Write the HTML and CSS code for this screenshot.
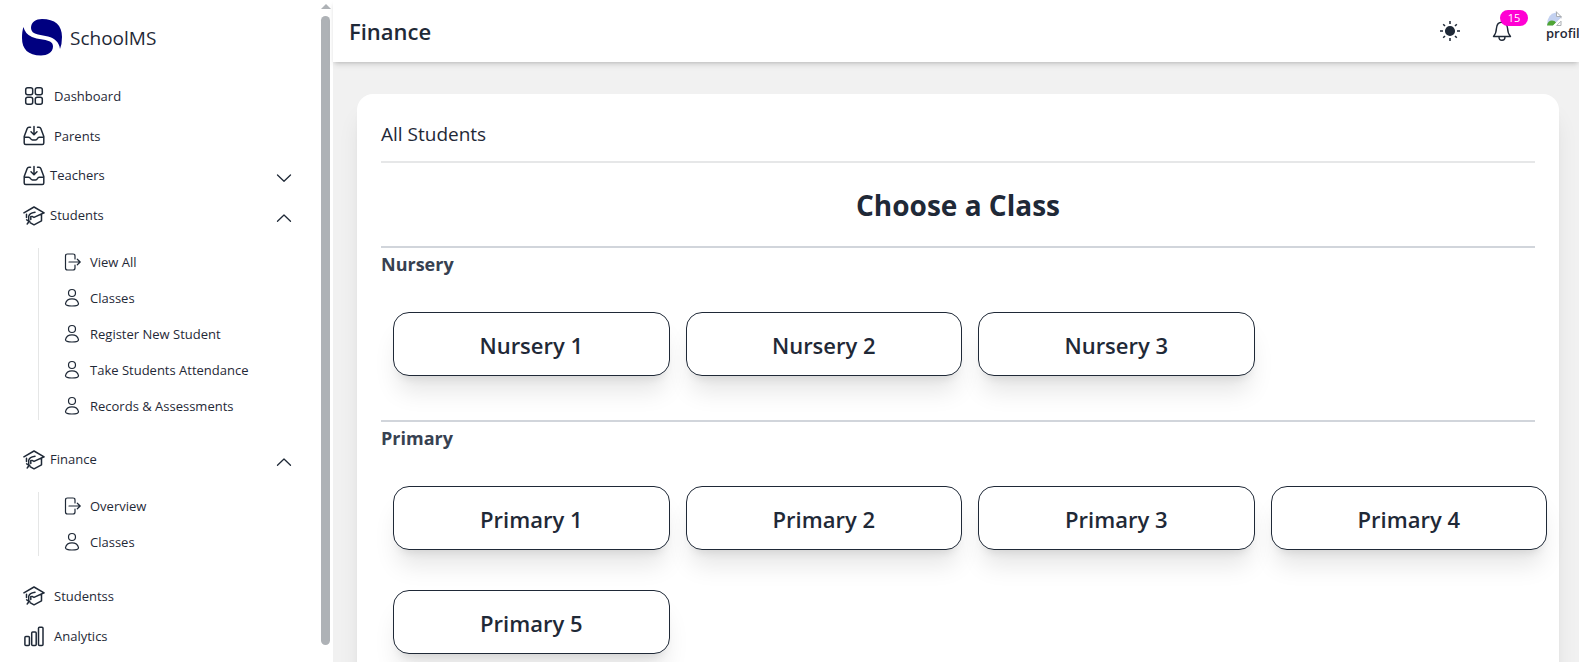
FILE: index.html
```html
<!DOCTYPE html>
<html lang="en">
<head>
<meta charset="utf-8">
<title>SchoolMS - Finance</title>
<link rel="stylesheet" href="styles.css">
</head>
<body>
<svg class="sprite" aria-hidden="true">
  <symbol id="grid" viewBox="0 0 22 22"><rect x="2.700" y="2.700" width="7" height="7" rx="2"/><rect x="12.300" y="2.700" width="7" height="7" rx="2"/><rect x="2.700" y="12.300" width="7" height="7" rx="2"/><rect x="12.300" y="12.300" width="7" height="7" rx="2"/></symbol>
  <symbol id="tray" viewBox="0 0 22 22"><path d="M7.500 2.200H6Q4.700 2.200 4.200 3.600L1.200 11.500V18Q1.200 19.500 2.700 19.500H19.300Q20.800 19.500 20.800 18V11.500L17.800 3.600Q17.300 2.200 16 2.200H14.500M1.200 12.200H5.500Q6.800 12.200 7.500 13.500T9.500 15H12.500Q13.800 15 14.500 13.500T16.500 12.200H20.800M11 1.500V9.500M8 6.800L11 9.800L14 6.800"/></symbol>
  <symbol id="cap" viewBox="0 0 22 22"><path d="M.900 7.800L11 2L21.100 7.800L11 12.400L9 11.300M3.500 9.200V12.500M7 17.600L11 19.800L18.500 15.800V9.300M12 7.200Q6 8.200 5.700 11.500V15Q5.700 17.500 4.200 19M3.600 14.800L6.800 16.400M7.800 11.500V14.500"/></symbol>
  <symbol id="exit" viewBox="0 0 18 20"><path d="M11 7V4Q11 2 9 2H3.500Q1.500 2 1.500 4V16Q1.500 18 3.500 18H9Q11 18 11 16V13M5 10H16M13.300 7.200L16.200 10L13.300 12.800"/></symbol>
  <symbol id="person" viewBox="0 0 18 20"><circle cx="8" cy="5" r="3.500"/><path d="M1.500 15.700Q2.500 10.800 8 10.800T14.500 15.700Q14.500 18 8 18T1.500 15.700Z"/></symbol>
  <symbol id="bars" viewBox="0 0 22 22"><rect x="1.900" y="11.500" width="4.500" height="9" rx="1"/><rect x="8.700" y="7" width="4.500" height="13.500" rx="1"/><rect x="15.500" y="2.200" width="4.500" height="18.300" rx="1"/></symbol>
  <symbol id="down" viewBox="0 0 16 16"><path d="M1.500 5L8 11.200L14.500 5"/></symbol>
  <symbol id="up" viewBox="0 0 16 16"><path d="M1.500 11.200L8 5L14.500 11.200"/></symbol>
</svg>
<div class="app">
  <aside class="sidebar">
    <div class="side-content">
      <a class="brand" href="#">
        <svg class="logo" viewBox="0 0 40 38"><path d="M9 9C9 3 14 0 20 0C33 0 40 6 40 18Q40 25 38 30C37 23 33 19.500 26 17.500L16 15.500Q9 14 9 9Z"/><path d="M1.500 8Q3 15 10 18C16 20.500 22 20 28 22.500Q31 24 31 27.500C31 33.500 25 36.500 19 36.500C6 36.500 0 30 0 19Q0 12 1.500 8Z"/></svg>
        <span>SchoolMS</span>
      </a>
      <nav aria-label="Main">
        <a class="item" href="#"><svg class="icon"><use href="#grid"/></svg>Dashboard</a>
        <a class="item" href="#"><svg class="icon"><use href="#tray"/></svg>Parents</a>
        <button class="item group" aria-expanded="false"><svg class="icon"><use href="#tray"/></svg><span>Teachers</span><svg class="chevron"><use href="#down"/></svg></button>
        <button class="item group" aria-expanded="true"><svg class="icon"><use href="#cap"/></svg><span>Students</span><svg class="chevron"><use href="#up"/></svg></button>
        <div class="submenu">
          <a class="subitem" href="#"><svg class="subicon"><use href="#exit"/></svg>View All</a>
          <a class="subitem" href="#"><svg class="subicon"><use href="#person"/></svg>Classes</a>
          <a class="subitem" href="#"><svg class="subicon"><use href="#person"/></svg>Register New Student</a>
          <a class="subitem" href="#"><svg class="subicon"><use href="#person"/></svg>Take Students Attendance</a>
          <a class="subitem" href="#"><svg class="subicon"><use href="#person"/></svg>Records &amp; Assessments</a>
        </div>
        <button class="item group" aria-expanded="true"><svg class="icon"><use href="#cap"/></svg><span>Finance</span><svg class="chevron"><use href="#up"/></svg></button>
        <div class="submenu">
          <a class="subitem" href="#"><svg class="subicon"><use href="#exit"/></svg>Overview</a>
          <a class="subitem" href="#"><svg class="subicon"><use href="#person"/></svg>Classes</a>
        </div>
        <a class="item" href="#"><svg class="icon"><use href="#cap"/></svg>Studentss</a>
        <a class="item" href="#"><svg class="icon"><use href="#bars"/></svg>Analytics</a>
      </nav>
    </div>
    <div class="scrollbar" aria-hidden="true"><div class="arrow"></div><div class="thumb"></div></div>
  </aside>
  <div class="page">
    <header class="topbar">
      <h1>Finance</h1>
      <div class="actions">
        <button class="action" aria-label="Toggle theme"><svg class="sun" viewBox="0 0 20 20"><circle cx="10" cy="10" r="4.300"/><path d="M10 0V3M10 17V20M0 10H3M17 10H20M3.200 3.200L5 5M15 15L16.800 16.800M16.800 3.200L15 5M5 15L3.200 16.800"/></svg></button>
        <button class="action bell" aria-label="Notifications"><svg class="belly" viewBox="0 0 20 22"><path d="M10 2.200Q15 2.200 15.500 8Q15.800 13.500 18.500 16.500H1.500Q4.200 13.500 4.500 8Q5 2.200 10 2.200ZM7 17Q7 20.300 10 20.300T13 17"/></svg><span class="badge">15</span></button>
        <a class="avatar" href="#">
          <svg class="broken" viewBox="0 0 16 16"><path d="M1 14Q1 3 10 1.500L15 5.500V7L7 14.500Z" fill="#c3d1f0"/><path d="M1 14.500Q2 9.500 6 9.500Q9 9.500 10 11.500L7 14.500Z" fill="#4fa535"/><path d="M10.500 1V5.500H15" fill="#fff"/><path d="M10.500 1L15 5.500V7M10.500 1V5.500H15M11 14.500H15V10.500Z" fill="none" stroke="#a9adb2"/><path d="M7 15L15 7V9.500L9.500 15Z" fill="#fff"/></svg>
          <span>profile</span>
        </a>
      </div>
    </header>
    <main class="main">
      <section class="panel">
        <h2 class="panel-title">All Students</h2>
        <h2 class="choose">Choose a Class</h2>
        <section class="level">
          <h3>Nursery</h3>
          <div class="classes"><a class="class" href="#">Nursery 1</a><a class="class" href="#">Nursery 2</a><a class="class" href="#">Nursery 3</a></div>
        </section>
        <section class="level">
          <h3>Primary</h3>
          <div class="classes"><a class="class" href="#">Primary 1</a><a class="class" href="#">Primary 2</a><a class="class" href="#">Primary 3</a><a class="class" href="#">Primary 4</a><a class="class" href="#">Primary 5</a></div>
        </section>
      </section>
    </main>
  </div>
</div>
</body>
</html>
```
FILE: styles.css
```css
* { box-sizing: border-box; }
body {
  margin: 0;
  color: #1f2937;
  background: #fff;
  font: 13px/20px "Open Sans", "Noto Sans", sans-serif;
}
h1, h2, h3 { margin: 0; }
a { color: inherit; text-decoration: none; }
button { padding: 0; border: 0; background: none; color: inherit; font: inherit; }
svg { flex: none; fill: none; stroke: currentColor; stroke-linecap: round; stroke-linejoin: round; }
.sprite { position: absolute; width: 0; height: 0; }
.app { display: flex; height: 100vh; overflow: hidden; }

.sidebar { display: flex; flex: none; width: 333px; }
.side-content { flex: 1; padding: 16px 29px 0 22px; overflow: hidden; }
.brand { display: flex; align-items: center; gap: 8px; height: 44px; margin-bottom: 16px; font-size: 19px; }
.logo { width: 40px; height: 38px; fill: #000080; stroke: none; }
.item { display: flex; align-items: center; gap: 9px; width: 100%; height: 40px; padding-left: 1px; }
.icon { width: 22px; height: 22px; stroke-width: 1.5; }
.group { gap: 5px; text-align: left; }
.group span { flex: 1; padding-bottom: 2px; }
.chevron { width: 16px; height: 16px; margin-top: 4px; stroke-width: 1.3; }
.submenu {
  display: grid;
  gap: 8px;
  margin: 12px 0 20px 16px;
  padding-left: 25px;
  border-left: 1px solid #e5e6e6;
}
.subitem { display: flex; align-items: center; gap: 8px; height: 28px; }
.subicon { width: 18px; height: 20px; stroke-width: 1.2; }
.scrollbar { display: flex; flex-direction: column; align-items: center; width: 9px; margin-right: 3px; padding: 4px 0 17px; }
.arrow { margin-bottom: 7px; border: solid transparent; border-width: 0 5px 5px; border-bottom-color: #aeb2b6; }
.thumb { flex: 1; width: 9px; border-radius: 5px; background: #aeb2b6; }

.page { display: flex; flex: 1; flex-direction: column; min-width: 0; background: #f1f1f1; }
.topbar {
  z-index: 1;
  display: flex;
  flex: none;
  align-items: center;
  justify-content: space-between;
  height: 62px;
  padding-left: 16px;
  background: #fff;
  box-shadow: 0 4px 6px -1px rgb(0 0 0 / 10%), 0 2px 4px -2px rgb(0 0 0 / 20%);
}
h1 { font-size: 22px; font-weight: 600; line-height: 32px; }
.actions { display: flex; align-items: center; height: 100%; }
.action { position: relative; display: grid; place-items: center; width: 52px; height: 48px; }
.sun { width: 20px; height: 20px; fill: currentColor; stroke-width: 1.5; stroke-linecap: butt; }
.belly { width: 20px; height: 22px; stroke-width: 1.4; }
.badge {
  position: absolute;
  top: 3px;
  left: 24px;
  width: 28px;
  border-radius: 8px;
  background: #ff00d3;
  color: #fff;
  font-size: 11px;
  line-height: 16px;
}
.avatar { display: flex; flex-direction: column; width: 33px; height: 40px; margin-left: 18px; overflow: hidden; font-weight: 600; line-height: 12px; }
.broken { width: 16px; height: 16px; stroke: none; }

.main { flex: 1; min-height: 0; padding: 32px 20px 0 24px; overflow: hidden; }
.panel {
  min-height: 100%;
  padding: 24px;
  border-radius: 16px;
  background: #fff;
  box-shadow: 0 20px 25px -5px rgb(0 0 0 / 10%), 0 8px 10px -6px rgb(0 0 0 / 10%);
}
.panel-title { padding: 2px 0 13px; border-bottom: 2px solid #e6e7e8; font-size: 19px; font-weight: 400; line-height: 28px; }
.choose { padding: 25px 0 23px; font-size: 28px; font-weight: 700; line-height: 35px; text-align: center; }
.level { padding-bottom: 44px; border-top: 2px solid #d1d5db; }
h3 { padding: 2px 0 34px; color: #374151; font-size: 18px; font-weight: 700; line-height: 28px; }
.classes { display: grid; grid-template-columns: repeat(4, 1fr); gap: 40px 16px; margin: 0 -12px 0 12px; }
.class {
  padding: 16px 15px 14px;
  border: 1px solid #1f2937;
  border-radius: 16px;
  background: #fff;
  box-shadow: 0 20px 25px -5px rgb(0 0 0 / 10%), 0 8px 10px -6px rgb(0 0 0 / 10%);
  font-size: 22px;
  font-weight: 600;
  line-height: 32px;
  text-align: center;
}
```
